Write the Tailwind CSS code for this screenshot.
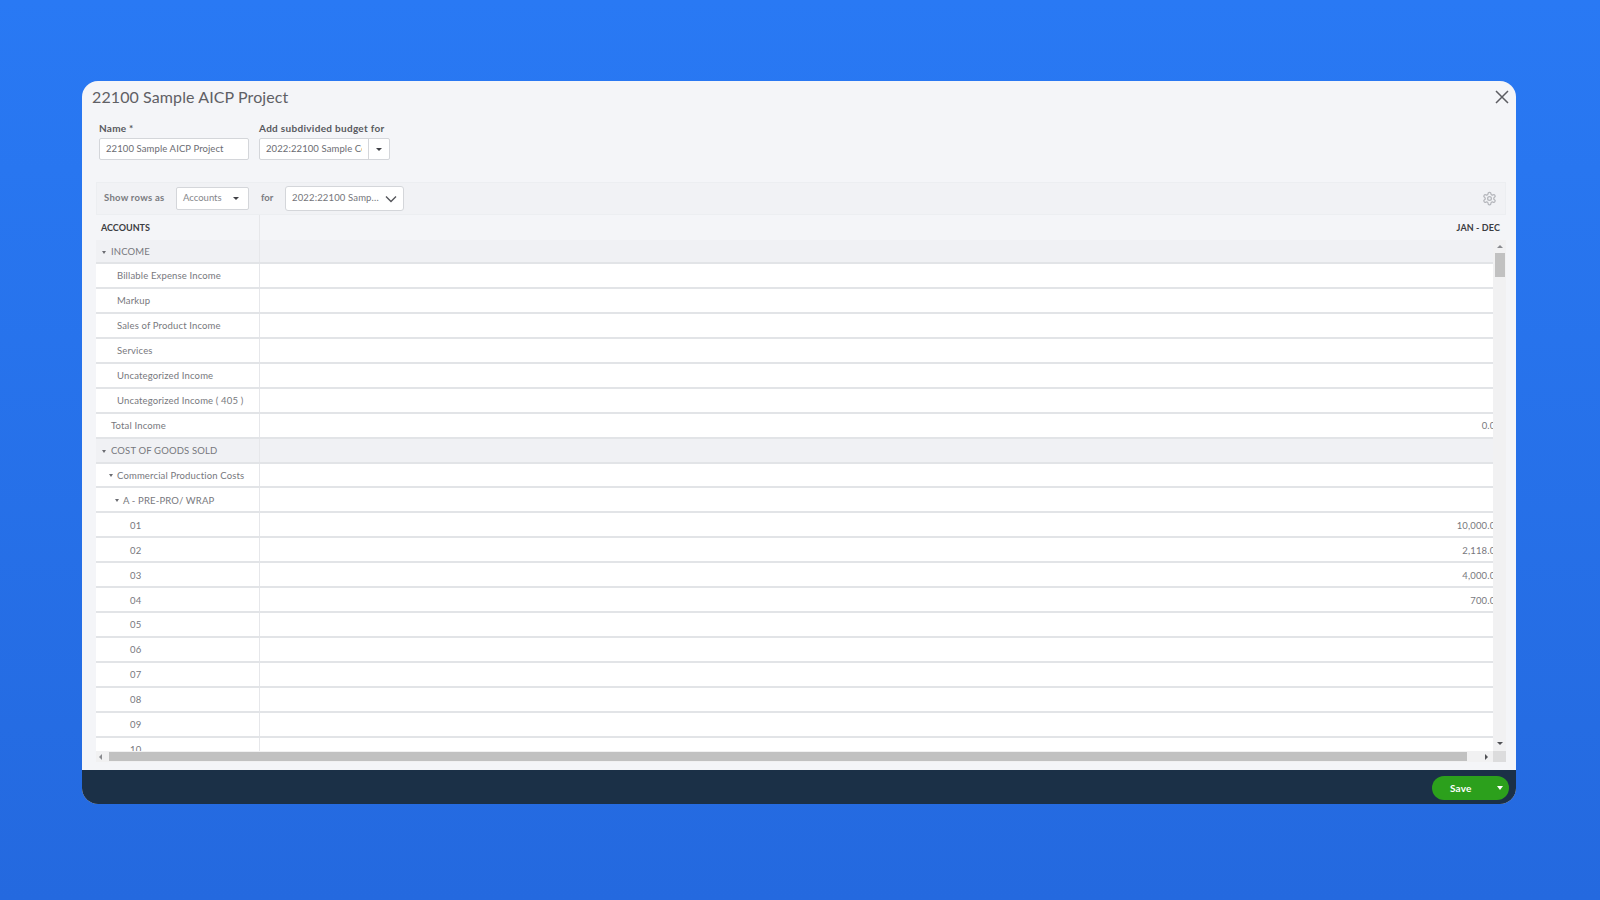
<!DOCTYPE html>
<html lang="en">
<head>
  <meta charset="UTF-8" />
  <title>22100 Sample AICP Project</title>
  <script src="https://cdn.jsdelivr.net/npm/@tailwindcss/browser@4"></script>
</head>
<body class="h-[900px] overflow-hidden bg-gradient-to-b from-[#2979f4] to-[#2469df] font-['Lato',sans-serif] text-[#77787d]">

<div class="pt-[81px] pl-[82px]">
  <div class="w-[1434px] h-[723px] rounded-[16px] overflow-hidden bg-[#f4f5f8] flex flex-col">

    <!-- Title -->
    <div class="h-[32px] flex items-center justify-between pl-[10px] pr-[6px] shrink-0">
      <h1 class="text-[16px] tracking-[0.1px] text-[#5f6065]">22100 Sample AICP Project</h1>
      <svg class="w-[16px] h-[16px]" viewBox="0 0 16 16" fill="none" stroke="#5c5d62" stroke-width="1.5"><path d="M2 2l12 12M14 2L2 14" /></svg>
    </div>

    <!-- Form -->
    <div class="flex gap-[10px] pl-[17px] pt-[8px] h-[69px] shrink-0">
      <div class="w-[150px]">
        <label class="block text-[10px] font-bold leading-[14px] text-[#58595e] tracking-[0.25px]">Name *</label>
        <div class="mt-[3px] h-[22px] flex items-center px-[6px] bg-white border border-[#d4d6da] rounded-[2px] text-[9.5px] tracking-[0.1px] text-[#6b6c72]">22100 Sample AICP Project</div>
      </div>
      <div>
        <label class="block text-[10px] font-bold leading-[14px] text-[#58595e] tracking-[0.3px]">Add subdivided budget for</label>
        <div class="mt-[3px] w-[131px] h-[22px] flex bg-white border border-[#d4d6da] rounded-[2px] text-[9.5px] tracking-[0.1px] text-[#6b6c72]">
          <div class="w-[109px] px-[6px] flex items-center overflow-hidden whitespace-nowrap border-r border-[#d4d6da]"><span class="block w-[97px] overflow-hidden">2022:22100 Sample Cost</span></div>
          <div class="flex-1 flex items-center justify-center"><span class="w-0 h-0 border-x-[3px] border-x-transparent border-t-[3px] border-t-[#3f4045]"></span></div>
        </div>
      </div>
    </div>

    <!-- Table area -->
    <div class="pl-[14px] w-[1424px] shrink-0">
      <div class="h-[33px] flex items-center bg-[#f1f2f5] border border-[#eceef1] pl-[7px] pr-[8px] text-[9.5px]">
        <span class="w-[72px] font-bold text-[#7a7b80] tracking-[0.25px]">Show rows as</span>
        <div class="w-[73px] h-[23px] flex items-center justify-between pl-[6px] pr-[9px] bg-white border border-[#d4d6da] rounded-[2px] text-[#85868b]">Accounts<span class="w-0 h-0 border-x-[3px] border-x-transparent border-t-[3px] border-t-[#3f4045]"></span></div>
        <span class="ml-[12px] w-[24px] font-bold text-[#7a7b80]">for</span>
        <div class="w-[119px] h-[25px] flex items-center justify-between pl-[6px] pr-[6px] bg-white border border-[#d4d6da] rounded-[3px] text-[#74757a] tracking-[0.15px] whitespace-nowrap">2022:22100 Samp...
          <svg class="w-[12px] h-[12px] mt-[1px]" viewBox="0 0 12 12" fill="none" stroke="#55565b" stroke-width="1.4"><path d="M1 3.5l5 5 5-5" /></svg>
        </div>
        <svg class="ml-auto w-[15px] h-[15px]" viewBox="0 0 24 24" fill="none" stroke="#b4b6bb" stroke-width="2"><path d="M12.22 2h-.44a2 2 0 0 0-2 2v.18a2 2 0 0 1-1 1.73l-.43.25a2 2 0 0 1-2 0l-.15-.08a2 2 0 0 0-2.73.73l-.22.38a2 2 0 0 0 .73 2.73l.15.1a2 2 0 0 1 1 1.72v.51a2 2 0 0 1-1 1.74l-.15.09a2 2 0 0 0-.73 2.73l.22.38a2 2 0 0 0 2.73.73l.15-.08a2 2 0 0 1 2 0l.43.25a2 2 0 0 1 1 1.73V20a2 2 0 0 0 2 2h.44a2 2 0 0 0 2-2v-.18a2 2 0 0 1 1-1.73l.43-.25a2 2 0 0 1 2 0l.15.08a2 2 0 0 0 2.73-.73l.22-.39a2 2 0 0 0-.73-2.73l-.15-.08a2 2 0 0 1-1-1.74v-.5a2 2 0 0 1 1-1.74l.15-.09a2 2 0 0 0 .73-2.73l-.22-.38a2 2 0 0 0-2.73-.73l-.15.08a2 2 0 0 1-2 0l-.43-.25a2 2 0 0 1-1-1.73V4a2 2 0 0 0-2-2z" /><circle cx="12" cy="12" r="3" /></svg>
      </div>

      <!-- Column header -->
      <div class="h-[25px] flex text-[9px] font-bold text-[#3c3d42]">
        <div class="w-[164px] pl-[5px] flex items-center border-r border-[#e6e7ea]">ACCOUNTS</div>
        <div class="flex-1 pr-[6px] flex items-center justify-end tracking-[0.1px]">JAN - DEC</div>
      </div>

      <div class="flex h-[511px] text-[9.5px]">
        <!-- Rows -->
        <div class="w-[1397px] overflow-hidden">
          <div class="w-[1410px] tracking-[0.15px] [&>div>div]:pt-[2px]">
            <div class="h-[24px] flex bg-[#f0f1f4] border-b-2 border-[#e2e4e7]"><div class="w-[164px] pl-[6px] flex items-center border-r border-[#e6e7ea]"><span class="w-0 h-0 mr-[5px] border-x-[2.5px] border-x-transparent border-t-[3px] border-t-[#6b6c72]"></span>INCOME</div></div>
            <div class="h-[24.95px] flex bg-white border-b-2 border-[#e2e4e7]"><div class="w-[164px] pl-[21px] flex items-center border-r border-[#e6e7ea]">Billable Expense Income</div></div>
            <div class="h-[24.95px] flex bg-white border-b-2 border-[#e2e4e7]"><div class="w-[164px] pl-[21px] flex items-center border-r border-[#e6e7ea]">Markup</div></div>
            <div class="h-[24.95px] flex bg-white border-b-2 border-[#e2e4e7]"><div class="w-[164px] pl-[21px] flex items-center border-r border-[#e6e7ea]">Sales of Product Income</div></div>
            <div class="h-[24.95px] flex bg-white border-b-2 border-[#e2e4e7]"><div class="w-[164px] pl-[21px] flex items-center border-r border-[#e6e7ea]">Services</div></div>
            <div class="h-[24.95px] flex bg-white border-b-2 border-[#e2e4e7]"><div class="w-[164px] pl-[21px] flex items-center border-r border-[#e6e7ea]">Uncategorized Income</div></div>
            <div class="h-[24.95px] flex bg-white border-b-2 border-[#e2e4e7]"><div class="w-[164px] pl-[21px] flex items-center border-r border-[#e6e7ea]">Uncategorized Income ( 405 )</div></div>
            <div class="h-[24.95px] flex bg-white border-b-2 border-[#e2e4e7]"><div class="w-[164px] pl-[15px] flex items-center border-r border-[#e6e7ea]">Total Income</div><div class="flex-1 pr-[5px] flex items-center justify-end">0.00</div></div>
            <div class="h-[24.95px] flex bg-[#f0f1f4] border-b-2 border-[#e2e4e7]"><div class="w-[164px] pl-[6px] flex items-center border-r border-[#e6e7ea]"><span class="w-0 h-0 mr-[5px] border-x-[2.5px] border-x-transparent border-t-[3px] border-t-[#6b6c72]"></span>COST OF GOODS SOLD</div></div>
            <div class="h-[24.95px] flex bg-white border-b-2 border-[#e2e4e7]"><div class="w-[164px] pl-[13px] flex items-center border-r border-[#e6e7ea]"><span class="w-0 h-0 mr-[4px] border-x-[2.5px] border-x-transparent border-t-[3px] border-t-[#6b6c72]"></span>Commercial Production Costs</div></div>
            <div class="h-[24.95px] flex bg-white border-b-2 border-[#e2e4e7]"><div class="w-[164px] pl-[19px] flex items-center border-r border-[#e6e7ea]"><span class="w-0 h-0 mr-[4px] border-x-[2.5px] border-x-transparent border-t-[3px] border-t-[#6b6c72]"></span>A - PRE-PRO/ WRAP</div></div>
            <div class="h-[24.95px] flex bg-white border-b-2 border-[#e2e4e7]"><div class="w-[164px] pl-[34px] flex items-center border-r border-[#e6e7ea]">01</div><div class="flex-1 pr-[5px] flex items-center justify-end">10,000.00</div></div>
            <div class="h-[24.95px] flex bg-white border-b-2 border-[#e2e4e7]"><div class="w-[164px] pl-[34px] flex items-center border-r border-[#e6e7ea]">02</div><div class="flex-1 pr-[5px] flex items-center justify-end">2,118.00</div></div>
            <div class="h-[24.95px] flex bg-white border-b-2 border-[#e2e4e7]"><div class="w-[164px] pl-[34px] flex items-center border-r border-[#e6e7ea]">03</div><div class="flex-1 pr-[5px] flex items-center justify-end">4,000.00</div></div>
            <div class="h-[24.95px] flex bg-white border-b-2 border-[#e2e4e7]"><div class="w-[164px] pl-[34px] flex items-center border-r border-[#e6e7ea]">04</div><div class="flex-1 pr-[5px] flex items-center justify-end">700.00</div></div>
            <div class="h-[24.95px] flex bg-white border-b-2 border-[#e2e4e7]"><div class="w-[164px] pl-[34px] flex items-center border-r border-[#e6e7ea]">05</div></div>
            <div class="h-[24.95px] flex bg-white border-b-2 border-[#e2e4e7]"><div class="w-[164px] pl-[34px] flex items-center border-r border-[#e6e7ea]">06</div></div>
            <div class="h-[24.95px] flex bg-white border-b-2 border-[#e2e4e7]"><div class="w-[164px] pl-[34px] flex items-center border-r border-[#e6e7ea]">07</div></div>
            <div class="h-[24.95px] flex bg-white border-b-2 border-[#e2e4e7]"><div class="w-[164px] pl-[34px] flex items-center border-r border-[#e6e7ea]">08</div></div>
            <div class="h-[24.95px] flex bg-white border-b-2 border-[#e2e4e7]"><div class="w-[164px] pl-[34px] flex items-center border-r border-[#e6e7ea]">09</div></div>
            <div class="h-[24.95px] flex bg-white border-b-2 border-[#e2e4e7]"><div class="w-[164px] pl-[34px] flex items-center border-r border-[#e6e7ea]">10</div></div>
          </div>
        </div>
        <!-- Vertical scrollbar -->
        <div class="w-[13px] bg-[#f1f1f2] flex flex-col items-center">
          <span class="mt-[5px] w-0 h-0 border-x-[3px] border-x-transparent border-b-[3px] border-b-[#8a8b8f]"></span>
          <div class="mt-[5px] w-[10px] h-[24px] bg-[#c1c1c1]"></div>
          <span class="mt-auto mb-[6px] w-0 h-0 border-x-[3px] border-x-transparent border-t-[3px] border-t-[#505155]"></span>
        </div>
      </div>

      <!-- Horizontal scrollbar -->
      <div class="h-[11px] flex items-center bg-[#f1f1f2]">
        <span class="ml-[3px] w-0 h-0 border-y-[3px] border-y-transparent border-r-[3px] border-r-[#8a8b8f]"></span>
        <div class="ml-[7px] w-[1358px] h-[9px] bg-[#c1c1c1]"></div>
        <span class="ml-[18px] w-0 h-0 border-y-[3px] border-y-transparent border-l-[3px] border-l-[#505155]"></span>
        <div class="ml-auto w-[13px] h-full bg-[#dcdcdd]"></div>
      </div>
    </div>

    <!-- Footer -->
    <div class="mt-auto h-[34px] bg-[#1b3047] flex items-center justify-end pr-[7px] pt-[2px] shrink-0">
      <div class="w-[77px] h-[24px] rounded-full bg-[#2ca01c] flex items-center text-white text-[10px] font-bold">
        <span class="ml-[18px] tracking-[0.2px]">Save</span>
        <span class="ml-auto mr-[6px] w-0 h-0 border-x-[3.5px] border-x-transparent border-t-[4px] border-t-white"></span>
      </div>
    </div>

  </div>
</div>

</body>
</html>
